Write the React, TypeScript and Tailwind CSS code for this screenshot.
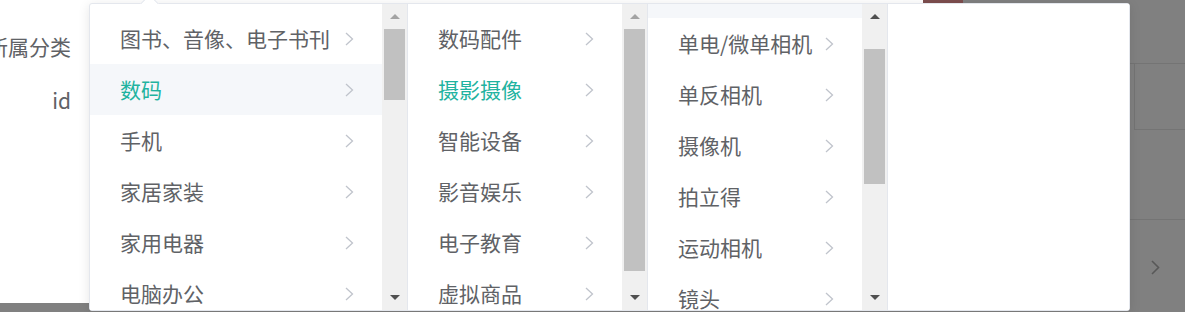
import React from "react";

type Item = { label: string; active?: boolean; hover?: boolean };

function Chevron() {
  return (
    <svg width="9" height="14" viewBox="0 0 9 14" className="shrink-0">
      <polyline points="1,1 7.5,7 1,13" fill="none" stroke="#c0c4cc" strokeWidth="1.3" />
    </svg>
  );
}

function Row({ item }: { item: Item }) {
  return (
    <div
      className={
        "h-[51px] shrink-0 flex items-center justify-between pl-[30px] pr-[28px] text-[21px] whitespace-nowrap " +
        (item.hover ? "bg-[#f5f7fa] " : "bg-white ") +
        (item.active ? "text-[#1fb3a0]" : "text-[#606266]")
      }
    >
      <span>{item.label}</span>
      <Chevron />
    </div>
  );
}

function Scrollbar({ upEnabled, thumbTop, thumbHeight }: { upEnabled: boolean; thumbTop: number; thumbHeight: number }) {
  return (
    <div className="w-[25px] h-full bg-[#f0f0f0] flex flex-col shrink-0">
      <div className="h-[25px] flex items-center justify-center">
        <div
          className={
            "w-0 h-0 border-l-[5px] border-r-[5px] border-b-[5px] border-l-transparent border-r-transparent " +
            (upEnabled ? "border-b-[#505050]" : "border-b-[#a3a3a3]")
          }
        />
      </div>
      <div className="flex-1 px-[2px]">
        <div className="bg-[#c1c1c1]" style={{ marginTop: thumbTop, height: thumbHeight }} />
      </div>
      <div className="h-[25px] flex items-center justify-center">
        <div className="w-0 h-0 border-l-[5px] border-r-[5px] border-t-[5px] border-l-transparent border-r-transparent border-t-[#505050]" />
      </div>
    </div>
  );
}

function Menu({
  items,
  width,
  offset,
  upEnabled,
  thumbTop,
  thumbHeight,
}: {
  items: Item[];
  width: string;
  offset: string;
  upEnabled: boolean;
  thumbTop: number;
  thumbHeight: number;
}) {
  return (
    <div className="flex h-full border-r border-[#e4e7ed] shrink-0">
      <div className={width + " h-full overflow-hidden"}>
        <div className={"flex flex-col " + offset}>
          {items.map((it) => (
            <Row key={it.label} item={it} />
          ))}
        </div>
      </div>
      <Scrollbar upEnabled={upEnabled} thumbTop={thumbTop} thumbHeight={thumbHeight} />
    </div>
  );
}

const col1: Item[] = [
  { label: "图书、音像、电子书刊" },
  { label: "数码", active: true, hover: true },
  { label: "手机" },
  { label: "家居家装" },
  { label: "家用电器" },
  { label: "电脑办公" },
];
const col2: Item[] = [
  { label: "数码配件" },
  { label: "摄影摄像", active: true },
  { label: "智能设备" },
  { label: "影音娱乐" },
  { label: "电子教育" },
  { label: "虚拟商品" },
];
const col3: Item[] = [
  { label: "数码相机", active: true, hover: true },
  { label: "单电/微单相机" },
  { label: "单反相机" },
  { label: "摄像机" },
  { label: "拍立得" },
  { label: "运动相机" },
  { label: "镜头" },
];

export default function App() {
  return (
    <div className="relative w-[1185px] h-[312px] overflow-hidden bg-[#808080] flex font-['Noto_Sans_CJK_SC','Noto_Sans',sans-serif]">
      {/* dialog beneath */}
      <div className="w-[923px] h-[303px] bg-white shrink-0">
        <div className="w-[89px] pr-[18px] pt-[31px] flex flex-col gap-[24px] text-[21px] text-[#606266]">
          <div className="h-[30px] leading-[30px] flex justify-end whitespace-nowrap">所属分类</div>
          <div className="h-[30px] leading-[30px] flex justify-end whitespace-nowrap">id</div>
        </div>
      </div>
      {/* masked page on the right */}
      <div className="flex-1 flex flex-col">
        <div className="h-[63px]">
          <div className="w-[40px] h-[3px] bg-[#7d4e4e]" />
        </div>
        <div className="h-[156px] border-t border-[#747474]">
          <div className="ml-[211px] h-[66px] border-l border-b border-[#747474]" />
        </div>
        <div className="flex-1 border-t border-[#747474]">
          <div className="ml-[228px] mt-[40px]">
            <svg width="9" height="15" viewBox="0 0 9 15">
              <polyline points="1,1 7.5,7.5 1,14" fill="none" stroke="#585858" strokeWidth="1.6" />
            </svg>
          </div>
        </div>
      </div>

      {/* cascader dropdown */}
      <div className="absolute left-[89px] top-[3px] w-[1041px] h-[308px] bg-white border border-[#e4e7ed] rounded-[3px] shadow-[0_2px_12px_0_rgba(0,0,0,0.1)]">
        <div className="absolute left-[53px] top-[-7px] w-[13px] h-[13px] rotate-45 bg-white border-t border-l border-[#e4e7ed]" />
        <div className="relative flex h-full">
          <Menu items={col1} width="w-[292px]" offset="pt-[9px]" upEnabled={false} thumbTop={0} thumbHeight={71} />
          <Menu items={col2} width="w-[214px]" offset="pt-[9px]" upEnabled={false} thumbTop={0} thumbHeight={242} />
          <Menu items={col3} width="w-[214px]" offset="mt-[-37px]" upEnabled={true} thumbTop={20} thumbHeight={135} />
          <div className="flex-1 bg-white" />
        </div>
      </div>
    </div>
  );
}
